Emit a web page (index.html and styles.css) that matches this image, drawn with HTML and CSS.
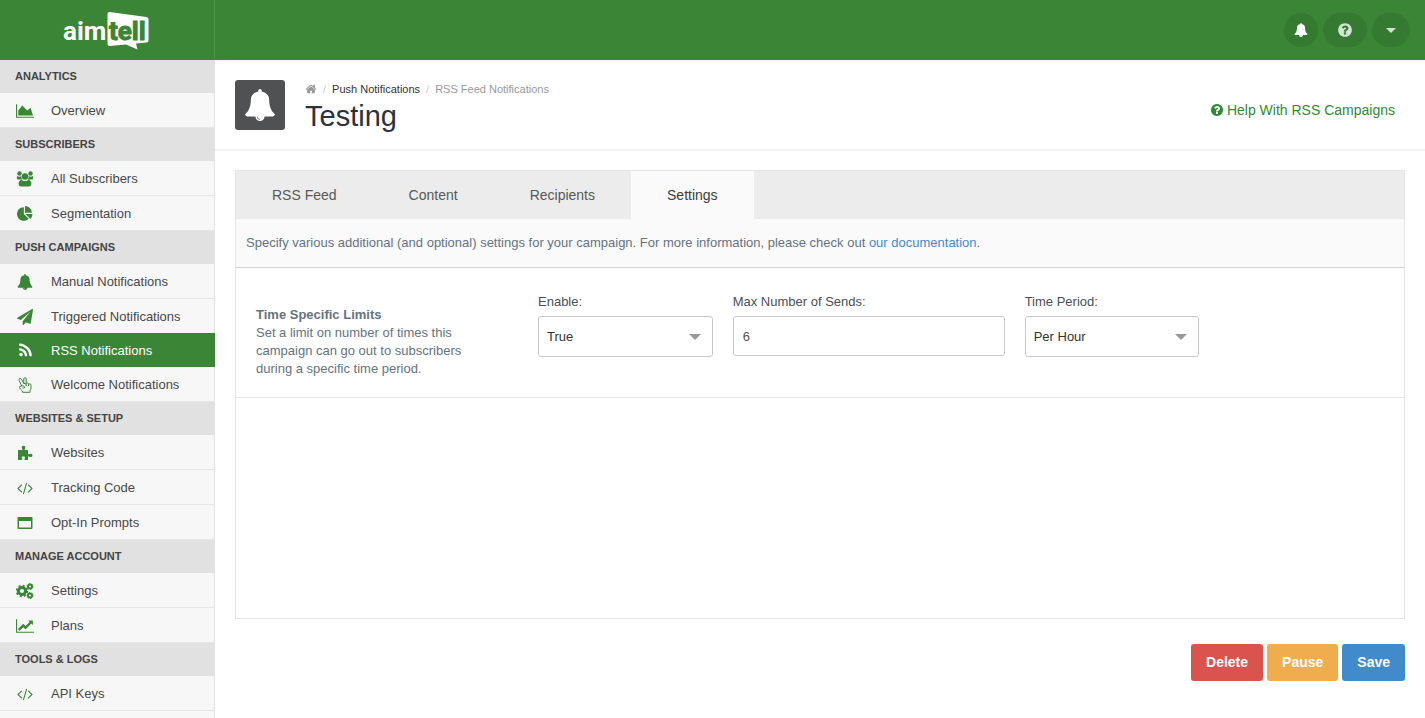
FILE: index.html
```
<!DOCTYPE html>
<html lang="en">
<head>
  <meta charset="UTF-8">
  <meta name="viewport" content="width=device-width, initial-scale=1">
  <title>Aimtell - RSS Notifications</title>
  <link rel="stylesheet" href="styles.css">
</head>
<body>
  <!-- Shared icons -->
  <svg class="sprite" aria-hidden="true">
    <symbol id="bell" viewBox="0 0 1792 1792"><path d="M912 1696q0-16-16-16-59 0-101.500-42.500t-42.500-101.500q0-16-16-16t-16 16q0 73 51.500 124.500t124.500 51.500q16 0 16-16zm816-288q0 52-38 90t-90 38h-448q0 106-75 181t-181 75-181-75-75-181h-448q-52 0-90-38t-38-90q50-42 91-88t85-119.500 74.500-158.500 50-206 19.500-260q0-152 117-282.500t307-158.500q-8-19-8-39 0-40 28-68t68-28 68 28 28 68q0 20-8 39 190 28 307 158.500t117 282.500q0 139 19.500 260t50 206 74.500 158.500 85 119.500 91 88z"/></symbol>
    <symbol id="question" viewBox="0 0 1792 1792"><path d="M1024 1376v-192q0-14-9-23t-23-9h-192q-14 0-23 9t-9 23v192q0 14 9 23t23 9h192q14 0 23-9t9-23zm256-672q0-88-55.500-163t-138.500-116-170-41q-243 0-371 213-15 24 8 42l132 100q7 6 19 6 16 0 25-12 53-68 86-92 34-24 86-24 48 0 85.500 26t37.500 59q0 38-20 61t-68 45q-63 28-115.500 86.500t-52.500 125.500v36q0 14 9 23t23 9h192q14 0 23-9t9-23q0-19 21.500-49.500t54.500-49.500q32-18 49-28.500t46-35 44.500-48 28-60.500 12.500-81zm384 192q0 209-103 385.500t-279.500 279.500-385.500 103-385.500-103-279.500-279.500-103-385.500 103-385.500 279.500-279.500 385.500-103 385.500 103 279.500 279.500 103 385.500z"/></symbol>
    <symbol id="code" viewBox="-64 0 1920 1792"><path d="M553 1399l-50 50q-10 10-23 10t-23-10l-466-466q-10-10-10-23t10-23l466-466q10-10 23-10t23 10l50 50q10 10 10 23t-10 23l-393 393 393 393q10 10 10 23t-10 23zm591-1067l-373 1291q-4 13-15.500 19.500t-23.500 2.500l-62-17q-13-4-19.500-15.500t-2.500-24.500l373-1291q4-13 15.500-19.500t23.500-2.500l62 17q13 4 19.500 15.500t2.500 24.500zm657 651l-466 466q-10 10-23 10t-23-10l-50-50q-10-10-10-23t10-23l393-393-393-393q-10-10-10-23t10-23l50-50q10-10 23-10t23 10l466 466q10 10 10 23t-10 23z"/></symbol>
  </svg>

  <header class="topbar">
    <a class="brand" href="#" aria-label="aimtell">
      <svg width="88" height="40" viewBox="0 0 88 40">
        <path class="bubble" d="M46.500 2 83.500 7Q85.500 7.300 85.500 9V30.500Q85.500 32.300 83.500 32.500L73 33.500 74.500 39.500 63 34.500 46.500 36Q44.500 36 44.500 34V4Q44.500 2 46.500 2Z"/>
        <text class="logo-aim" x="0" y="30">aim</text>
        <text class="logo-tell" x="46" y="30">tell</text>
      </svg>
    </a>
    <div class="top-actions">
      <button class="round" type="button" aria-label="Notifications"><svg class="icon-small" viewBox="0 0 1792 1792"><use href="#bell"/></svg></button>
      <button class="round help" type="button" aria-label="Help"><svg class="icon-medium" viewBox="0 0 1792 1792"><use href="#question"/></svg></button>
      <button class="round account" type="button" aria-label="Account"><span class="caret"></span></button>
    </div>
  </header>

  <div class="layout">
    <nav class="sidebar">
      <h2>Analytics</h2>
      <ul>
        <li><a href="#"><svg viewBox="0 0 2048 1792"><path d="M2048 1536v128h-2048v-1536h128v1408h1920zm-384-1024l256 896h-1664v-576l448-576 576 576z"/></svg>Overview</a></li>
      </ul>
      <h2>Subscribers</h2>
      <ul>
        <li><a href="#"><svg viewBox="0 0 18 16"><circle cx="3.500" cy="2.500" r="2.200"/><circle cx="14.500" cy="2.500" r="2.200"/><path d="M1 5Q3 6.500 5.300 5 5 7.500 6.500 8.500H2Q.8 8.500.8 7ZM17 5Q15 6.500 12.700 5 13 7.500 11.500 8.500H16Q17.200 8.500 17.200 7Z"/><circle cx="9" cy="5.500" r="3.200"/><path d="M5 8.500Q9 11.500 13 8.500 15.500 10 15.300 13.500 15 15.500 13 15.500H5Q3 15.500 2.700 13.500 2.500 10 5 8.500Z"/></svg>All Subscribers</a></li>
        <li><a href="#"><svg viewBox="0 0 1792 1792"><path d="M768 890l546 546q-106 108-247.500 168t-298.500 60q-209 0-385.500-103t-279.500-279.500-103-385.500 103-385.500 279.500-279.500 385.500-103v762zm187 6h773q0 157-60 298.500t-168 247.500zm709-128h-768v-768q209 0 385.500 103t279.500 279.500 103 385.500z"/></svg>Segmentation</a></li>
      </ul>
      <h2>Push Campaigns</h2>
      <ul>
        <li><a href="#"><svg viewBox="0 0 1792 1792"><use href="#bell"/></svg>Manual Notifications</a></li>
        <li><a href="#"><svg viewBox="0 0 1792 1792"><path d="M1764 11q33 24 27 64l-256 1536q-5 29-32 45-14 8-31 8-11 0-24-5l-453-185-242 295q-18 23-49 23-13 0-22-4-19-7-30.500-23.500t-11.500-36.500v-349l864-1059-1069 925-395-162q-37-14-40-55-2-40 32-59l1664-960q15-9 32-9 20 0 36 11z"/></svg>Triggered Notifications</a></li>
        <li class="active"><a href="#"><svg viewBox="-60 60 1792 1792"><path d="M576 1344q0 80-56 136t-136 56-136-56-56-136 56-136 136-56 136 56 56 136zm512 123q2 28-17 48-18 21-47 21h-135q-25 0-43-16.500t-20-41.500q-22-229-184.500-391.500t-391.500-184.500q-25-2-41.500-20t-16.500-43v-135q0-29 21-47 17-17 43-17h5q160 13 306 80.500t259 181.500q114 113 181.500 259t80.500 306zm512 2q2 27-18 47-18 20-46 20h-143q-26 0-44.500-17.500t-19.500-42.500q-12-215-101-408.500t-231.500-336-336-231.500-408.500-102q-25-1-42.500-19.500t-17.500-43.500v-143q0-28 20-46 18-18 44-18h3q262 13 501.500 120t425.500 294q187 186 294 425.500t120 501.500z"/></svg>RSS Notifications</a></li>
        <li><a href="#"><svg viewBox="0 0 16 16"><path class="line" d="M4.800 9 2 3.300Q1.600 2 2.700 1.500 3.800 1.200 4.300 2.200L6.800 6.500V1.900Q7 .7 8 .7 9.200.8 9.200 1.900V6.500M9.200 7.500Q9.300 6 10.400 6 11.500 6 11.600 7.500V9M11.600 7.800Q11.800 6.800 12.700 6.800 14 7 14 8.300V11Q13.800 13 13 13.800V15.300H5.500V14Q3 12 2.500 10.500 2.500 9 4 9H6.500Q8 9.500 7.500 11H5.500M6.800 6.500Q9.200 6 9.200 8V9"/></svg>Welcome Notifications</a></li>
      </ul>
      <h2>Websites &amp; Setup</h2>
      <ul>
        <li><a href="#"><svg viewBox="0 0 16 16"><path d="M1 5H5.200Q5.700 4.500 5 3.500 4 1 6.500.8 9 1 8 3.500 7.300 4.500 7.800 5H11V9Q11.500 9.700 12.500 9 15.500 8 15.500 10.300 15.500 12.800 12.500 11.700 11.500 11 11 11.700V15H7.800Q7.200 14.500 7.700 13.500 8.500 11.300 6.400 11.200 4.200 11.300 5 13.500 5.500 14.500 4.800 15H1Z"/></svg>Websites</a></li>
        <li><a href="#"><svg viewBox="0 0 1792 1792"><use href="#code"/></svg>Tracking Code</a></li>
        <li><a href="#"><svg viewBox="0 0 16 16"><path fill-rule="evenodd" d="M1.500 2H14.500Q15.500 2 15.500 3V13Q15.500 14 14.500 14H1.500Q.5 14 .5 13V3Q.5 2 1.500 2ZM2 6V12.500H14V6Z"/></svg>Opt-In Prompts</a></li>
      </ul>
      <h2>Manage Account</h2>
      <ul>
        <li><a href="#"><svg viewBox="0 0 18 16"><circle class="gear" cx="6" cy="8" r="3.600"/><circle class="teeth" cx="6" cy="8" r="5.300"/><circle class="gear-small" cx="14" cy="3.500" r="2"/><circle class="teeth-small" cx="14" cy="3.500" r="3"/><circle class="gear-small" cx="14" cy="12.500" r="2"/><circle class="teeth-small" cx="14" cy="12.500" r="3"/></svg>Settings</a></li>
        <li><a href="#"><svg viewBox="0 0 2048 1792"><path d="M2048 1536v128h-2048v-1536h128v1408h1920zm-128-1248v435q0 21-19.500 29.500t-35.500-7.500l-121-121-633 633q-10 10-23 10t-23-10l-233-233-416 416-192-192 585-585q10-10 23-10t23 10l233 233 464-464-121-121q-16-16-7.500-35.500t29.500-19.500h435q14 0 23 9t9 23z"/></svg>Plans</a></li>
      </ul>
      <h2>Tools &amp; Logs</h2>
      <ul>
        <li><a href="#"><svg viewBox="0 0 1792 1792"><use href="#code"/></svg>API Keys</a></li>
      </ul>
    </nav>

    <main class="main">
      <div class="page-head">
        <div class="page-icon"><svg viewBox="0 0 1792 1792"><use href="#bell"/></svg></div>
        <div class="page-title">
          <div class="breadcrumb">
            <a href="#" aria-label="Home"><svg viewBox="0 0 1792 1792"><path d="M1472 992v480q0 26-19 45t-45 19h-384v-384h-256v384h-384q-26 0-45-19t-19-45v-480q0-1 .5-3t.5-3l575-474 575 474q1 2 1 6zm223-69l-62 74q-8 9-21 11h-3q-13 0-21-7l-692-577-692 577q-12 8-24 7-13-2-21-11l-62-74q-8-10-7-23.500t11-21.500l719-599q32-26 76-26t76 26l244 204v-195q0-14 9-23t23-9h192q14 0 23 9t9 23v408l219 182q10 8 11 21.500t-7 23.500z"/></svg></a>
            <span class="sep">/</span>
            <a href="#">Push Notifications</a>
            <span class="sep">/</span>
            <span>RSS Feed Notifications</span>
          </div>
          <h1>Testing</h1>
        </div>
        <a class="help-link" href="#"><svg viewBox="0 0 1792 1792"><use href="#question"/></svg>Help With RSS Campaigns</a>
      </div>

      <div class="content">
        <section class="panel">
          <div class="tabs" role="tablist">
            <button type="button" role="tab">RSS Feed</button>
            <button type="button" role="tab">Content</button>
            <button type="button" role="tab">Recipients</button>
            <button type="button" role="tab" class="active" aria-selected="true">Settings</button>
          </div>
          <p class="intro">Specify various additional (and optional) settings for your campaign. For more information, please check out <a href="#">our documentation</a>.</p>
          <form class="setting-row">
            <div class="setting-info">
              <h3>Time Specific Limits</h3>
              <p>Set a limit on number of times this campaign can go out to subscribers during a specific time period.</p>
            </div>
            <div class="field">
              <label for="enable">Enable:</label>
              <div class="select">
                <select id="enable">
                  <option>True</option>
                  <option>False</option>
                </select>
              </div>
            </div>
            <div class="field wide">
              <label for="sends">Max Number of Sends:</label>
              <input type="text" id="sends" value="6">
            </div>
            <div class="field">
              <label for="period">Time Period:</label>
              <div class="select">
                <select id="period">
                  <option>Per Hour</option>
                  <option>Per Day</option>
                </select>
              </div>
            </div>
          </form>
        </section>

        <div class="actions">
          <button type="button" class="btn delete">Delete</button>
          <button type="button" class="btn pause">Pause</button>
          <button type="button" class="btn save">Save</button>
        </div>
      </div>
    </main>
  </div>
</body>
</html>
```
FILE: styles.css
```
* {
  box-sizing: border-box;
}

body {
  margin: 0;
  min-height: 100vh;
  display: flex;
  flex-direction: column;
  font-family: "Liberation Sans", Arial, sans-serif;
  font-size: 13px;
  line-height: 18px;
  color: #4b4f54;
  background: #fff;
}

h1, h2, h3, p, ul {
  margin: 0;
  padding: 0;
}

a {
  text-decoration: none;
}

button, input, select {
  font-family: inherit;
}

svg {
  fill: currentColor;
}

.sprite {
  display: none;
}

/* Top bar */
.topbar {
  height: 60px;
  display: flex;
  justify-content: space-between;
  background: #3a8636;
}

.brand {
  width: 215px;
  padding-top: 10px;
  display: flex;
  justify-content: center;
  align-items: flex-start;
  border-right: 1px solid #4b9247;
}

.brand svg {
  overflow: visible;
}

.brand text {
  font-family: Roboto, sans-serif;
  font-size: 26px;
  font-weight: 700;
}

.bubble,
.logo-aim {
  fill: #fff;
}

.logo-tell {
  fill: #3a8636;
  stroke: #3a8636;
}

.top-actions {
  display: flex;
  align-items: center;
  gap: 5px;
  padding-right: 15px;
}

.round {
  width: 34px;
  height: 34px;
  padding: 0;
  display: flex;
  align-items: center;
  justify-content: center;
  border: none;
  border-radius: 17px;
  background: #357a31;
  color: #fff;
  cursor: pointer;
}

.round.help {
  width: 44px;
  color: #d3e4d2;
}

.round.account {
  width: 38px;
}

.icon-small {
  width: 14px;
  height: 14px;
}

.icon-medium {
  width: 16px;
  height: 16px;
}

.caret {
  border: 5px solid transparent;
  border-top-color: #d3e4d2;
  border-bottom: none;
}

/* Sidebar */
.layout {
  flex: 1;
  display: flex;
}

.sidebar {
  width: 215px;
  flex-shrink: 0;
  background: #f7f7f7;
  border-right: 1px solid #e2e2e2;
}

.sidebar h2 {
  padding: 0 15px;
  font-size: 11px;
  line-height: 33px;
  text-transform: uppercase;
  color: #444;
  background: #e1e1e1;
}

.sidebar ul {
  list-style: none;
}

.sidebar li {
  border-bottom: 1px solid #e6e6e6;
}

.sidebar li a {
  display: flex;
  align-items: center;
  gap: 17px;
  padding: 2px 0 0 16px;
  line-height: 32px;
  color: #484848;
}

.sidebar li svg {
  width: 18px;
  height: 16px;
  color: #3a8636;
}

.sidebar li.active {
  margin: -1px -1px 0 0;
  border-bottom: none;
  background: #3a8636;
}

.sidebar li.active a,
.sidebar li.active svg {
  color: #fff;
}

.line {
  fill: none;
  stroke: currentColor;
  stroke-width: 1;
  stroke-linejoin: round;
}

.gear,
.teeth,
.gear-small,
.teeth-small {
  fill: none;
  stroke: currentColor;
  stroke-width: 3;
}

.teeth {
  stroke-width: 2;
  stroke-dasharray: 2 2.160;
}

.gear-small {
  stroke-width: 2;
}

.teeth-small {
  stroke-width: 1;
  stroke-dasharray: 1.400 1.740;
}

/* Page heading */
.main {
  flex: 1;
  min-width: 0;
}

.page-head {
  display: flex;
  align-items: flex-start;
  gap: 20px;
  padding: 20px 30px 9px 20px;
  border-bottom: 2px solid #f3f3f3;
}

.page-icon {
  width: 50px;
  height: 50px;
  display: flex;
  align-items: center;
  justify-content: center;
  border-radius: 3px;
  background: #505153;
  color: #fff;
}

.page-icon svg {
  width: 32px;
  height: 32px;
}

.page-title {
  flex: 1;
}

.breadcrumb {
  display: flex;
  align-items: center;
  gap: 6px;
  font-size: 11px;
  color: #999;
}

.breadcrumb a {
  color: #333;
}

.breadcrumb svg {
  display: block;
  width: 12px;
  height: 12px;
  color: #999;
}

.sep {
  color: #ccc;
}

h1 {
  font-size: 29px;
  font-weight: 400;
  line-height: 36px;
  color: #2b323c;
}

.help-link {
  display: flex;
  align-items: center;
  gap: 3px;
  font-size: 14px;
  line-height: 60px;
  color: #2f8a35;
}

.help-link svg {
  width: 14px;
  height: 14px;
}

/* Settings panel */
.content {
  padding: 19px 20px;
}

.panel {
  min-height: 449px;
  border: 1px solid #e5e5e5;
}

.tabs {
  display: flex;
  background: #ececec;
}

.tabs button {
  padding: 0 36px;
  border: none;
  background: none;
  font-size: 14px;
  line-height: 48px;
  color: #585858;
  cursor: pointer;
}

.tabs button.active {
  background: #fafafa;
  color: #3c3c3c;
}

.intro {
  padding: 15px 10px;
  background: #fafafa;
  border-bottom: 1px solid #d0d2d3;
  color: #67727e;
}

.intro a {
  color: #428bca;
}

.setting-row {
  display: grid;
  grid-template-columns: repeat(12, 1fr);
  padding: 25px 0 19px;
  border-bottom: 1px solid #e5e5e5;
}

.setting-info {
  grid-column: span 3;
  padding: 13px 50px 0 20px;
  color: #67727e;
}

.setting-info h3 {
  font-size: 13px;
}

.field {
  grid-column: span 2;
  padding: 0 10px;
}

.field.wide {
  grid-column: span 3;
}

.field label {
  display: block;
  margin-bottom: 5px;
}

.field input,
.field select {
  display: block;
  width: 100%;
  height: 40px;
  padding: 0 9px;
  border: 1px solid #c6c9cc;
  border-radius: 3px;
  background: #fff;
  font-size: 13px;
  color: #555;
}

.field select {
  height: 41px;
  padding: 0 8px;
  appearance: none;
  color: #333;
}

.select {
  position: relative;
}

.select::after {
  content: "";
  position: absolute;
  top: 18px;
  right: 12px;
  border: 6px solid transparent;
  border-top-color: #999;
  border-bottom: none;
  pointer-events: none;
}

/* Bottom buttons */
.actions {
  display: flex;
  justify-content: flex-end;
  gap: 4px;
  margin-top: 25px;
}

.btn {
  padding: 0 15px;
  border: none;
  border-radius: 3px;
  font-size: 14px;
  font-weight: 700;
  line-height: 37px;
  color: #fff;
  cursor: pointer;
}

.delete {
  background: #d9534f;
}

.pause {
  background: #f0ad4e;
}

.save {
  background: #428bca;
}
```
